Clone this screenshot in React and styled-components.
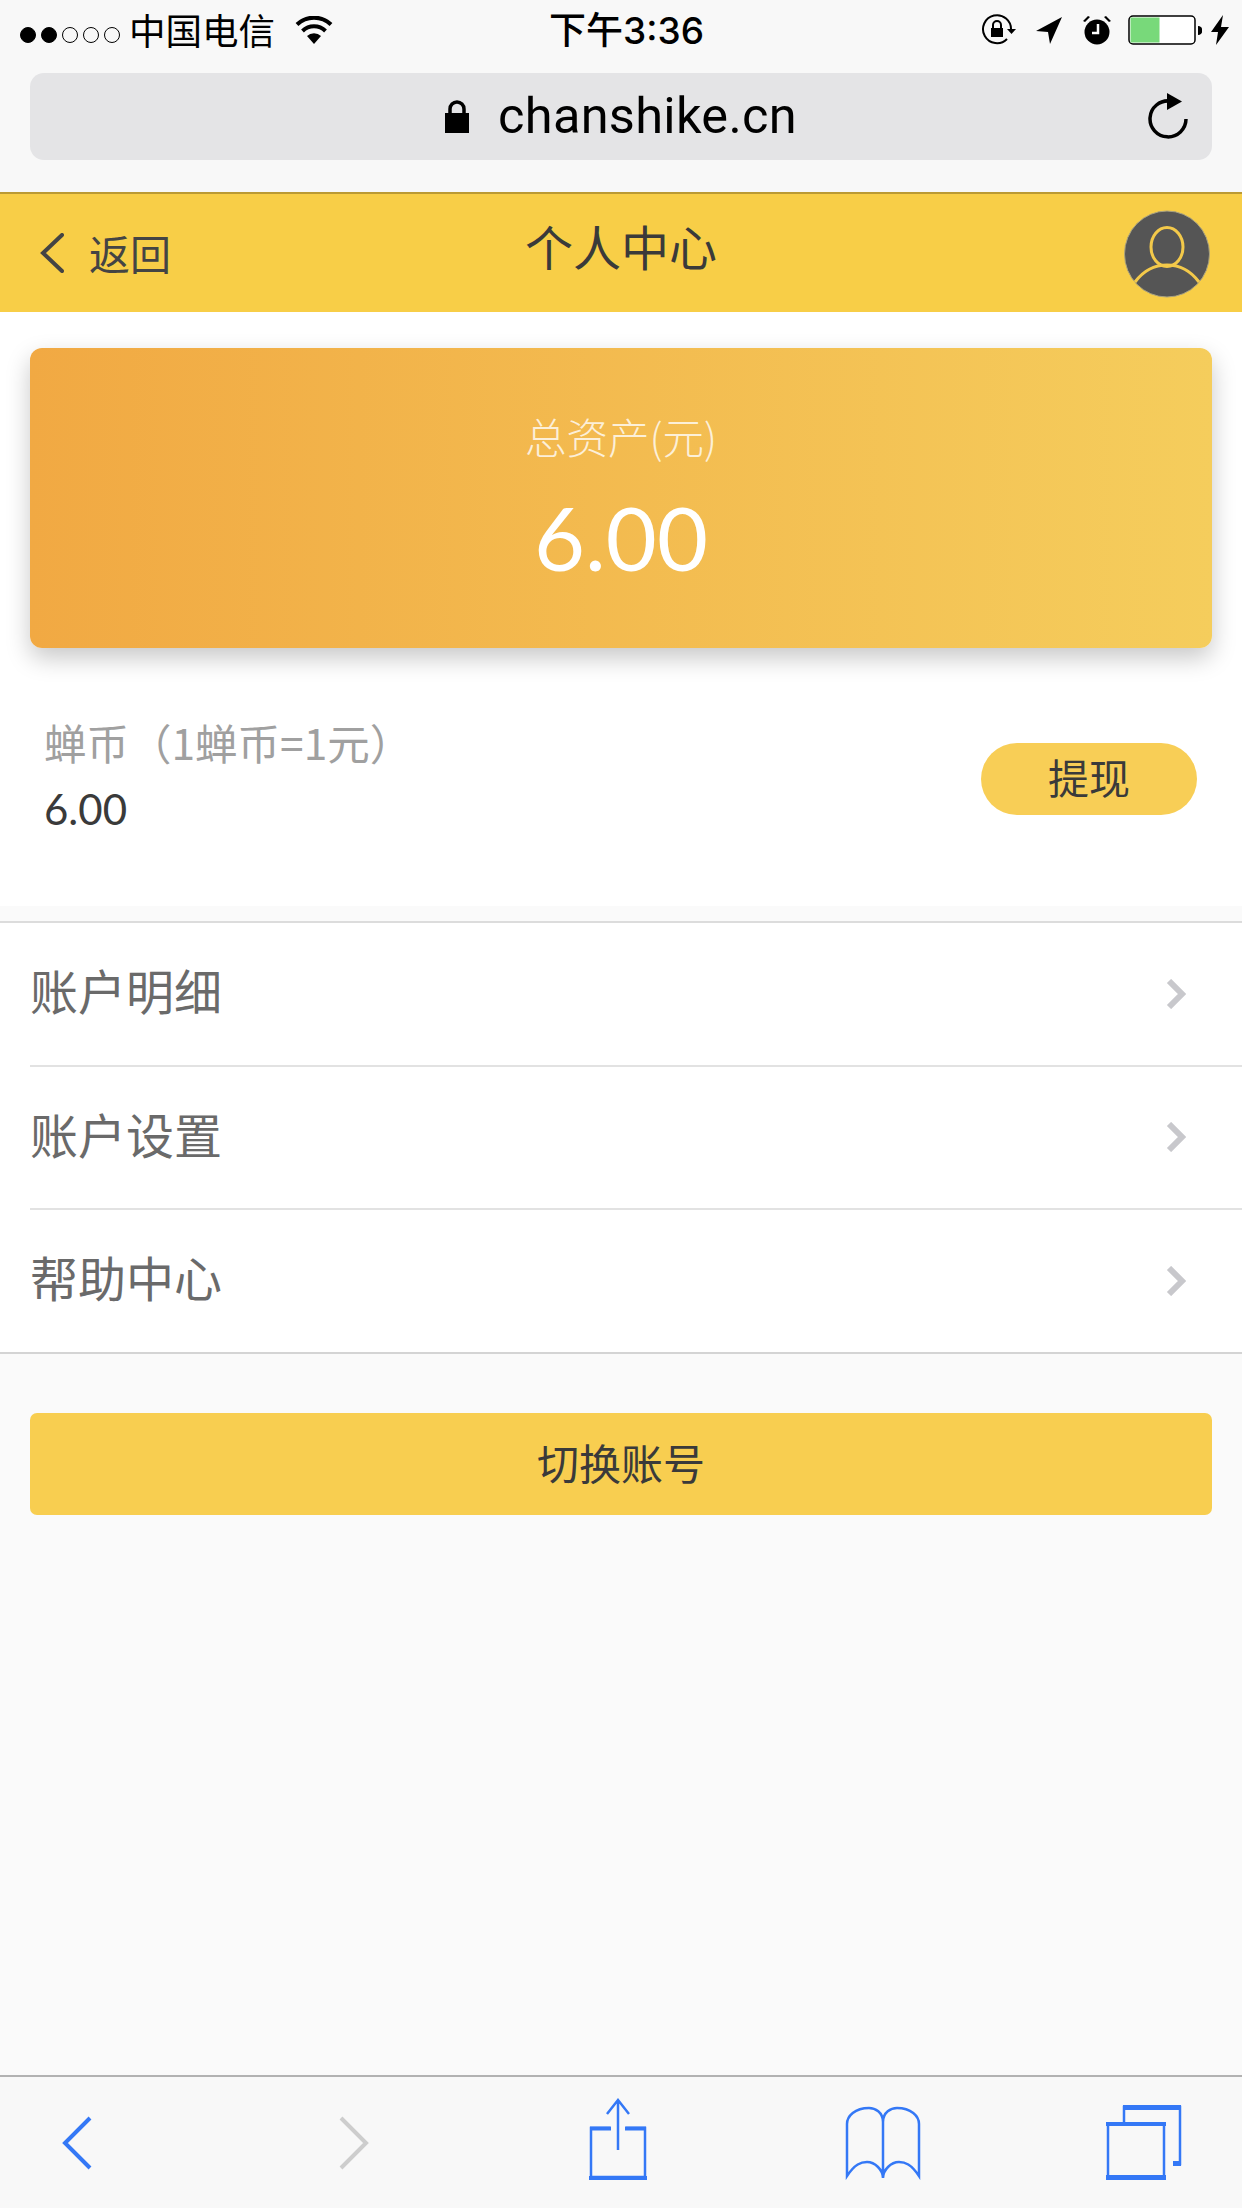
import React from 'react';
import styled, { createGlobalStyle } from 'styled-components';

const Global = createGlobalStyle`
  html, body { margin: 0; padding: 0; background: #fafafa; }
  * { box-sizing: border-box; }
  body { font-family: "Noto Sans CJK SC", "Liberation Sans", sans-serif; }
`;
const CJK = `"Noto Sans CJK SC", sans-serif`;
const NUM = `Lato, "Open Sans", sans-serif`;

const Page = styled.div`
  width: 1242px; height: 2208px; display: flex; flex-direction: column; overflow: hidden; background: #fafafa;
`;
const Chrome = styled.div`
  height: 192px; background: #f8f8f8; display: flex; flex-direction: column; padding: 0 30px; flex: none;
`;
const StatusBar = styled.div`
  height: 73px; margin: 0 -30px; padding: 0 13px 0 20px; display: flex; align-items: center; position: relative; color: #000;
`;
const Dots = styled.div` display: flex; gap: 5px; margin-top: -4px; `;
const Dot = styled.span`
  width: 16px; height: 16px; border-radius: 50%; border: 1.5px solid #000; background: ${p => (p.$on ? '#000' : 'transparent')};
`;
const Carrier = styled.span`
  font: 400 36.5px/1 ${CJK}; margin-left: 9px; margin-top: -13px;
`;
const WifiIcon = styled.svg` margin-left: 20px; margin-top: -13px; `;
const Clock = styled.span`
  position: absolute; left: 0; right: 0; text-align: center; top: 9px; padding-left: 11px; font: 500 37px/44px Inter, ${CJK};
`;
const StatusRight = styled.div` margin-left: auto; display: flex; align-items: center; margin-top: -13px; `;
const StatusIcon = styled.svg` margin-left: ${p => p.$gap}px; `;
const Pill = styled.div`
  height: 87px; background: #e4e4e6; border-radius: 14px; display: flex; align-items: center; position: relative; justify-content: center;
`;
const Url = styled.span`
  font: 400 50.5px/1 Roboto, "Liberation Sans", sans-serif; color: #000; margin-left: 29px; letter-spacing: 0.3px;
`;
const Reload = styled.svg` position: absolute; right: 24px; top: 20px; `;
const Header = styled.header`
  height: 120px; flex: none; background: #f8ce47; border-top: 2px solid #bb9a34; display: flex; align-items: center; padding: 0 32px 0 40px; position: relative; color: #333;
`;
const BackLabel = styled.span` font: 400 41px/1 ${CJK}; margin-left: 25px; margin-top: -2px; color: #444; `;
const Title = styled.h1`
  position: absolute; left: 0; right: 0; top: 27px; margin: 0; text-align: center; font: 400 48px/1 ${CJK}; color: #3a3a3a;
`;
const Avatar = styled.svg` margin-left: auto; margin-top: 2px; `;
const Summary = styled.section`
  background: #fff; padding: 36px 30px 0; height: 594px; flex: none;
`;
const Card = styled.div`
  height: 300px; border-radius: 12px; background: linear-gradient(90deg, #f1a943 0%, #f5cd5c 100%);
  box-shadow: 0 10px 24px rgba(0,0,0,.22); color: #fff; display: flex; flex-direction: column; align-items: center; padding-top: 64px;
`;
const CardLabel = styled.div` font: 300 41.5px/48px ${CJK}; color: rgba(255,255,255,.78); `;
const CardValue = styled.div` font: 400 88px/1 ${NUM}; margin-top: 33px; `;
const Coins = styled.div` display: flex; align-items: center; padding: 0 15px 0 14px; margin-top: 70px; `;
const CoinInfo = styled.div` display: flex; flex-direction: column; `;
const CoinLabel = styled.div` font: 400 42.5px/48px ${CJK}; color: #a0a0a0; `;
const CoinValue = styled.div` font: 400 42px/48px ${NUM}; color: #3a3a3a; margin-top: 19px; `;
const Withdraw = styled.button`
  margin-left: auto; margin-top: 6px; width: 216px; height: 72px; border: 0; border-radius: 36px; background: #f8ce56; color: #3a3a3a; font: 400 41px/1 ${CJK}; padding: 0 0 4px;
`;
const Menu = styled.nav`
  margin-top: 15px; background: #fff; border-top: 2px solid #dcdcdc; flex: none;
`;
const MenuRow = styled.a`
  height: 143.5px; margin-left: ${p => (p.$last ? 0 : 30)}px; padding: 0 56px 0 ${p => (p.$last ? 30 : 0)}px; display: flex; align-items: center; justify-content: space-between;
  color: #6a6a6a; font: 400 48px/1 ${CJK}; border-bottom: 2px solid ${p => (p.$last ? '#d4d4d4' : '#e2e2e2')};
`;
const MenuLabel = styled.span` margin-top: -9px; `;
const Switch = styled.button`
  margin: 59.5px 30px 0; height: 102px; flex: none; border: 0; border-radius: 7px; background: #f8ce50; color: #3a3a3a; font: 400 42px/1 ${CJK}; padding: 0 0 5px;
`;
const Spacer = styled.div` flex: 1; `;
const Toolbar = styled.footer`
  height: 133px; flex: none; background: #f8f8f8; border-top: 2px solid #b2b2b2; display: flex; align-items: flex-start; padding-left: 62px;
`;
const ToolIcon = styled.svg` margin-left: ${p => p.$gap}px; margin-top: ${p => p.$top}px; flex: none; `;

const BLUE = '#3478f6';

export default function App() {
  return (
    <Page>
      <Global />
      <Chrome>
        <StatusBar>
          <Dots>
            {[1, 1, 0, 0, 0].map((on, i) => <Dot key={i} $on={!!on} />)}
          </Dots>
          <Carrier>中国电信</Carrier>
          <WifiIcon width="38" height="28" viewBox="0 0 38 28">
            <path d="M19 28l-7-8a10 10 0 0 1 14 0z" fill="#000" />
            <path d="M7.5 15a16.5 16.5 0 0 1 23 0" fill="none" stroke="#000" strokeWidth="4" />
            <path d="M2 8.5a24.5 24.5 0 0 1 34 0" fill="none" stroke="#000" strokeWidth="4" />
          </WifiIcon>
          <Clock>下午3:36</Clock>
          <StatusRight>
            <StatusIcon $gap={0} width="36" height="32" viewBox="0 0 36 32">
              <path d="M26 25a14 14 0 1 1 4-9" fill="none" stroke="#000" strokeWidth="2" />
              <path d="M26 15h9l-4.500 5z" fill="#000" />
              <path d="M12 14v-3a4 4 0 0 1 8 0v3" fill="none" stroke="#000" strokeWidth="2" />
              <rect x="10" y="14" width="12" height="9" fill="#000" />
            </StatusIcon>
            <StatusIcon $gap={18} width="28" height="28" viewBox="0 0 28 28">
              <path d="M27 1L1 15l12 1 2 12z" fill="#000" />
            </StatusIcon>
            <StatusIcon $gap={19} width="30" height="30" viewBox="0 0 30 30">
              <circle cx="15" cy="17" r="12.500" fill="#000" />
              <path d="M1 6l5-5 2 1-5 5zM29 6l-5-5-2 1 5 5z" fill="#000" />
              <path d="M16 9v9h-6" fill="none" stroke="#fff" strokeWidth="2.500" />
            </StatusIcon>
            <StatusIcon $gap={16} width="74" height="30" viewBox="0 0 74 30">
              <rect x="1" y="1" width="66" height="28" rx="4" fill="#fff" stroke="#000" strokeWidth="1.500" />
              <rect x="2.500" y="2.500" width="29" height="25" fill="#78d97a" />
              <path d="M70 11a4 4 0 0 1 0 9z" fill="#000" />
            </StatusIcon>
            <StatusIcon $gap={9} width="18" height="30" viewBox="0 0 18 30">
              <path d="M12 0L0 17h7L5 30 18 12h-8z" fill="#000" />
            </StatusIcon>
          </StatusRight>
        </StatusBar>
        <Pill>
          <svg width="24" height="33" viewBox="0 0 24 33">
            <path d="M5 15V9a7 7 0 0 1 14 0v6" fill="none" stroke="#000" strokeWidth="3.500" />
            <rect y="13" width="24" height="20" fill="#000" />
          </svg>
          <Url>chanshike.cn</Url>
          <Reload width="40" height="46" viewBox="0 0 40 46">
            <path d="M22 8A18 18 0 1 0 38 26" fill="none" stroke="#000" strokeWidth="3.500" />
            <path d="M19 0l15 8.500-15 8.500z" fill="#000" />
          </Reload>
        </Pill>
      </Chrome>
      <Header>
        <svg width="24" height="40" viewBox="0 0 24 40">
          <path d="M22 2L3 20l19 18" fill="none" stroke="#444" strokeWidth="4" strokeLinecap="round" />
        </svg>
        <BackLabel>返回</BackLabel>
        <Title>个人中心</Title>
        <Avatar width="86" height="88" viewBox="0 0 86 88">
          <ellipse cx="43" cy="44" rx="42.500" ry="43" fill="#555" stroke="#a9a281" strokeWidth="1" />
          <ellipse cx="43" cy="37" rx="16" ry="19.500" fill="none" stroke="#f3c94a" strokeWidth="3" />
          <path d="M11 72C20 60 31 55 43 55s23 5 32 17" fill="none" stroke="#f3c94a" strokeWidth="3" />
        </Avatar>
      </Header>
      <Summary>
        <Card>
          <CardLabel>总资产(元)</CardLabel>
          <CardValue>6.00</CardValue>
        </Card>
        <Coins>
          <CoinInfo>
            <CoinLabel>蝉币（1蝉币=1元）</CoinLabel>
            <CoinValue>6.00</CoinValue>
          </CoinInfo>
          <Withdraw>提现</Withdraw>
        </Coins>
      </Summary>
      <Menu>
        {['账户明细', '账户设置', '帮助中心'].map((t, i) => (
          <MenuRow key={t} $last={i === 2}>
            <MenuLabel>{t}</MenuLabel>
            <svg width="20" height="30" viewBox="0 0 20 30">
              <path d="M3 2l13 13L3 28" fill="none" stroke="#c8c8cc" strokeWidth="6" />
            </svg>
          </MenuRow>
        ))}
      </Menu>
      <Switch>切换账号</Switch>
      <Spacer />
      <Toolbar>
        <ToolIcon $gap={0} $top={39} width="30" height="54" viewBox="0 0 30 54">
          <path d="M28 2L3 27l25 25" fill="none" stroke={BLUE} strokeWidth="4" />
        </ToolIcon>
        <ToolIcon $gap={247} $top={39} width="30" height="54" viewBox="0 0 30 54">
          <path d="M2 2l25 25L2 52" fill="none" stroke="#cdcdcd" strokeWidth="4" />
        </ToolIcon>
        <ToolIcon $gap={220} $top={21} width="58" height="82" viewBox="0 0 58 82">
          <path d="M21 30H2v49h54V30H37" fill="none" stroke={BLUE} strokeWidth="2.500" />
          <path d="M0 78h58v4H0zM1 28.500h21v4H1zM36 28.500h21v4H36z" fill={BLUE} />
          <path d="M29 52V2M18 16L29 2l11 14" fill="none" stroke={BLUE} strokeWidth="2.500" />
        </ToolIcon>
        <ToolIcon $gap={198} $top={29} width="76" height="74" viewBox="0 0 76 74">
          <path d="M38 16C38 6 30 2 24 2 10 2 2 10 2 18v52c8-12 14-14 20-14 8 0 16 8 16 16 0-8 8-16 16-16 6 0 12 2 20 14V18C74 10 66 2 52 2c-6 0-14 4-14 14v56" fill="none" stroke={BLUE} strokeWidth="2.500" />
        </ToolIcon>
        <ToolIcon $gap={185} $top={27} width="76" height="76" viewBox="0 0 76 76">
          <path d="M18 18V3h56v57h-7" fill="none" stroke={BLUE} strokeWidth="2.500" />
          <path d="M17 1h58v5H17zM67 57h8v5h-8z" fill={BLUE} />
          <path d="M2 20h56v54H2z" fill="none" stroke={BLUE} strokeWidth="2.500" />
          <path d="M0 18h60v4H0zM0 71h60v5H0z" fill={BLUE} />
        </ToolIcon>
      </Toolbar>
    </Page>
  );
}
